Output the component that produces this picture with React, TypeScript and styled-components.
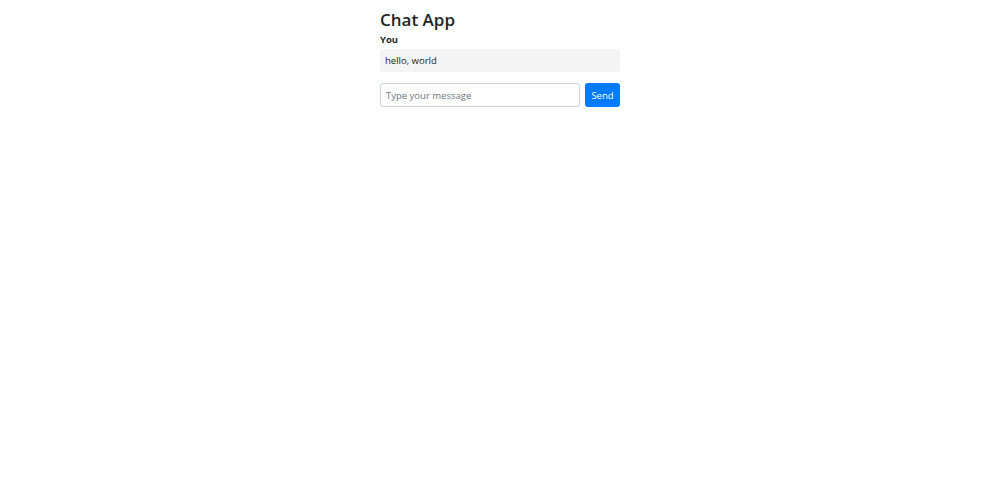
import React, { useState } from "react";
import styled, { createGlobalStyle } from "styled-components";

const GlobalStyle = createGlobalStyle`
  body {
    margin: 0;
    background: #fff;
    font-family: "Open Sans", "DejaVu Sans", sans-serif;
    color: #212529;
  }
`;

const Container = styled.div`
  width: 240px;
  margin: 0 auto;
  padding-top: 8px;
`;

const Title = styled.h1`
  font-size: 17px;
  font-weight: 600;
  margin: 0 0 1px;
  line-height: 24px;
`;

const Message = styled.div`
  margin-bottom: 11px;
`;

const Sender = styled.div`
  font-size: 9.5px;
  font-weight: 700;
  line-height: 14px;
  margin-bottom: 2px;
`;

const Bubble = styled.div`
  background: #f5f5f5;
  border-radius: 3px;
  padding: 0 5px;
  height: 23px;
  display: flex;
  align-items: center;
  font-size: 9.5px;
  color: #222;
`;

const Form = styled.form`
  display: flex;
  gap: 5px;
`;

const Input = styled.input`
  flex: 1;
  height: 24px;
  box-sizing: border-box;
  border: 1px solid #ced4da;
  border-radius: 3px;
  padding: 0 5px;
  font-size: 9.5px;
  font-family: inherit;
  &::placeholder {
    color: #6c757d;
  }
`;

const Button = styled.button`
  width: 35px;
  height: 24px;
  border: none;
  border-radius: 3px;
  background: #007bff;
  color: #fff;
  font-size: 9.5px;
  font-family: inherit;
  cursor: pointer;
`;

export default function App() {
  const [messages, setMessages] = useState([{ sender: "You", text: "hello, world" }]);
  const [value, setValue] = useState("");

  const send = (e: React.FormEvent) => {
    e.preventDefault();
    if (!value.trim()) return;
    setMessages([...messages, { sender: "You", text: value }]);
    setValue("");
  };

  return (
    <>
      <GlobalStyle />
      <Container>
        <Title>Chat App</Title>
        {messages.map((m, i) => (
          <Message key={i}>
            <Sender>{m.sender}</Sender>
            <Bubble>{m.text}</Bubble>
          </Message>
        ))}
        <Form onSubmit={send}>
          <Input
            placeholder="Type your message"
            value={value}
            onChange={(e) => setValue(e.target.value)}
          />
          <Button type="submit">Send</Button>
        </Form>
      </Container>
    </>
  );
}
